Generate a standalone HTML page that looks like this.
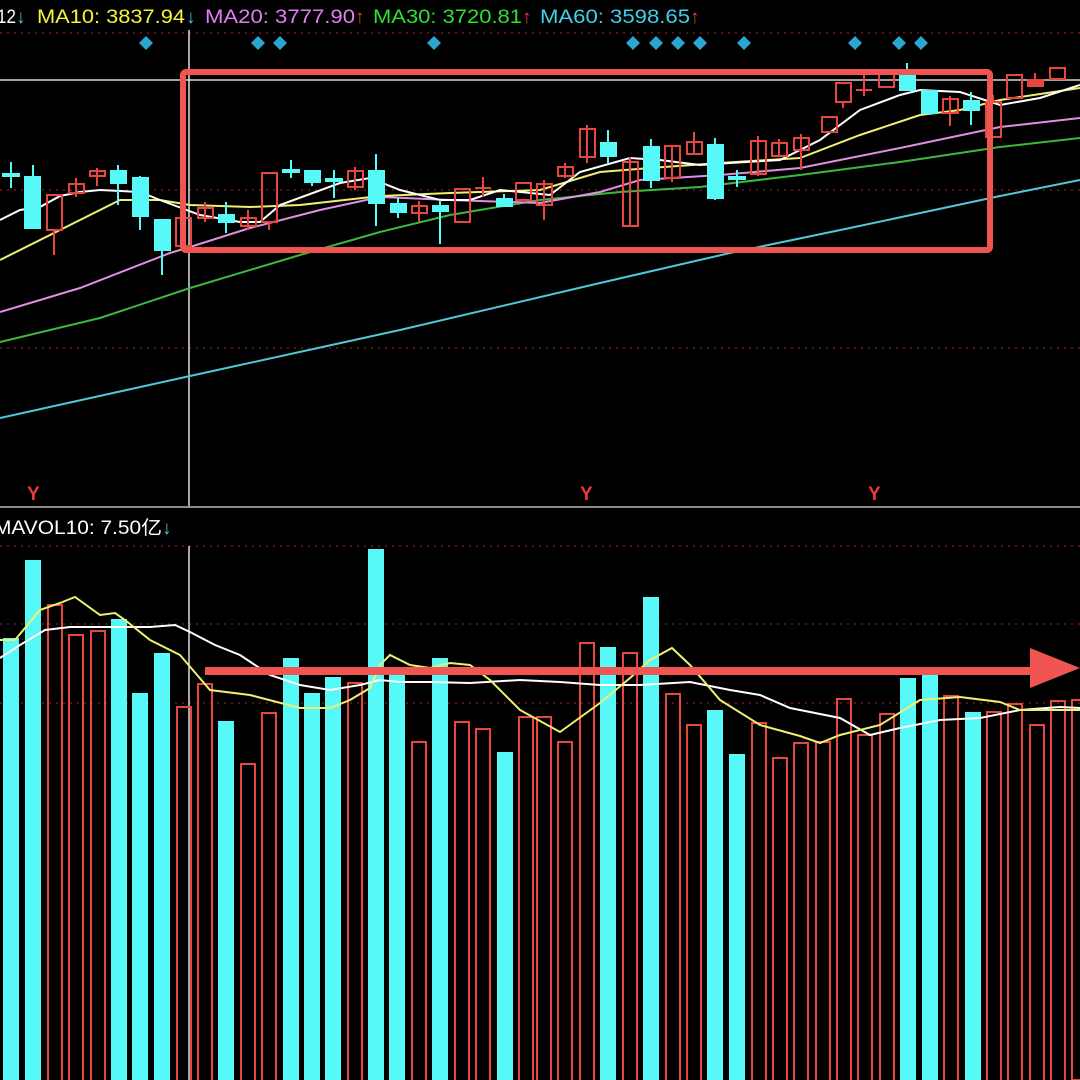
<!DOCTYPE html>
<html><head><meta charset="utf-8"><style>
html,body{margin:0;padding:0;background:#000;width:1080px;height:1080px;overflow:hidden}
svg{display:block}
text{font-family:"Liberation Sans","Noto Sans CJK SC",sans-serif}
</style></head><body>
<svg width="1080" height="1080" viewBox="0 0 1080 1080" xmlns="http://www.w3.org/2000/svg">
<rect width="1080" height="1080" fill="#000"/>
<!-- grid -->
<g stroke="#8a1f1f" stroke-width="1.3" stroke-dasharray="2 5">
<line x1="0" y1="33" x2="1080" y2="33"/>
<line x1="0" y1="190" x2="1080" y2="190"/>
<line x1="0" y1="348" x2="1080" y2="348"/>
<line x1="0" y1="546" x2="1080" y2="546"/>
<line x1="0" y1="624" x2="1080" y2="624"/>
<line x1="0" y1="703" x2="1080" y2="703"/>
</g>
<line x1="0" y1="507" x2="1080" y2="507" stroke="#bbb" stroke-width="1.5"/>
<line x1="0" y1="80" x2="1080" y2="80" stroke="#fff" stroke-width="1.3"/>
<line x1="189" y1="30" x2="189" y2="506" stroke="#fff" stroke-width="1.3"/>
<line x1="189" y1="546" x2="189" y2="1080" stroke="#fff" stroke-width="1.3"/>
<!-- header -->
<g font-size="19">
<text x="-3" y="23" fill="#fff" textLength="19" lengthAdjust="spacingAndGlyphs">12</text>
<text x="16" y="23" fill="#4fc0d8">↓</text>
<text x="37" y="23" fill="#f5f53c" textLength="148" lengthAdjust="spacingAndGlyphs">MA10: 3837.94</text>
<text x="186" y="23" fill="#4fc0d8">↓</text>
<text x="205" y="23" fill="#e080f0" textLength="150" lengthAdjust="spacingAndGlyphs">MA20: 3777.90</text>
<text x="355" y="23" fill="#e04040">↑</text>
<text x="373" y="23" fill="#30e030" textLength="149" lengthAdjust="spacingAndGlyphs">MA30: 3720.81</text>
<text x="522" y="23" fill="#e04040">↑</text>
<text x="540" y="23" fill="#40d0e8" textLength="150" lengthAdjust="spacingAndGlyphs">MA60: 3598.65</text>
<text x="690" y="23" fill="#e04040">↑</text>
</g>
<!-- diamonds -->
<g fill="#2aa6d0">
<path d="M146 36l7 7-7 7-7-7z"/><path d="M258 36l7 7-7 7-7-7z"/><path d="M280 36l7 7-7 7-7-7z"/><path d="M434 36l7 7-7 7-7-7z"/><path d="M633 36l7 7-7 7-7-7z"/><path d="M656 36l7 7-7 7-7-7z"/><path d="M678 36l7 7-7 7-7-7z"/><path d="M700 36l7 7-7 7-7-7z"/><path d="M744 36l7 7-7 7-7-7z"/><path d="M855 36l7 7-7 7-7-7z"/><path d="M899 36l7 7-7 7-7-7z"/><path d="M921 36l7 7-7 7-7-7z"/>
</g>
<!-- MA lines -->
<g fill="none" stroke-width="2">
<polyline stroke="#4fc8d8" points="0,418 190,376 400,330 600,283 730,253 850,228 1000,196 1080,180"/>
<polyline stroke="#3cb83c" points="0,342 100,318 190,288 300,255 380,232 450,215 540,200 620,192 700,187 800,175 900,162 1000,147 1080,138"/>
<polyline stroke="#e090e0" points="0,312 80,288 170,253 190,247 250,228 320,210 380,197 450,200 540,203 600,192 640,180 720,175 800,168 850,158 900,148 1000,127 1080,118"/>
<polyline stroke="#f0f070" points="0,260 60,230 120,200 160,200 190,205 250,207 300,205 380,196 450,193 540,190 600,172 650,168 720,163 800,158 860,135 920,115 960,110 1000,100 1080,88"/>
<polyline stroke="#fff" points="0,220 20,210 40,207 60,196 80,192 100,190 140,192 160,200 200,215 240,222 260,222 280,205 340,183 370,178 400,190 440,200 470,200 500,190 550,195 580,172 630,158 660,160 700,165 730,163 780,160 820,140 860,110 900,95 920,90 960,92 1000,105 1040,98 1080,85"/>
</g>
<!-- candles -->
<g stroke-width="2">
<g stroke="#56f8f8" fill="#56f8f8">
<line x1="11" y1="162" x2="11" y2="188"/><rect x="3" y="174" width="16" height="2"/>
<line x1="33" y1="165" x2="33" y2="228"/><rect x="25" y="177" width="15" height="51"/>
<line x1="118" y1="165" x2="118" y2="205"/><rect x="111" y="171" width="15" height="12"/>
<line x1="140" y1="176" x2="140" y2="230"/><rect x="133" y="178" width="15" height="38"/>
<line x1="162" y1="220" x2="162" y2="275"/><rect x="155" y="220" width="15" height="30"/>
<line x1="226" y1="202" x2="226" y2="233"/><rect x="219" y="215" width="15" height="7"/>
<line x1="291" y1="160" x2="291" y2="178"/><rect x="283" y="170" width="16" height="2"/>
<line x1="312" y1="171" x2="312" y2="186"/><rect x="305" y="171" width="15" height="11"/>
<line x1="334" y1="170" x2="334" y2="198"/><rect x="326" y="179" width="16" height="2"/>
<line x1="376" y1="154" x2="376" y2="226"/><rect x="369" y="171" width="15" height="32"/>
<line x1="398" y1="198" x2="398" y2="218"/><rect x="391" y="204" width="15" height="8"/>
<line x1="440" y1="200" x2="440" y2="244"/><rect x="433" y="206" width="15" height="5"/>
<line x1="504" y1="194" x2="504" y2="206"/><rect x="497" y="199" width="15" height="7"/>
<line x1="608" y1="130" x2="608" y2="163"/><rect x="601" y="143" width="15" height="13"/>
<line x1="651" y1="139" x2="651" y2="188"/><rect x="644" y="147" width="15" height="33"/>
<line x1="715" y1="138" x2="715" y2="200"/><rect x="708" y="145" width="15" height="53"/>
<line x1="737" y1="170" x2="737" y2="187"/><rect x="729" y="177" width="16" height="2"/>
<line x1="907" y1="63" x2="907" y2="90"/><rect x="900" y="74" width="15" height="16"/>
<line x1="929" y1="91" x2="929" y2="115"/><rect x="922" y="91" width="15" height="22"/>
<line x1="971" y1="92" x2="971" y2="125"/><rect x="964" y="101" width="15" height="9"/>
</g>
<g stroke="#e8453e" fill="none">
<line x1="54" y1="230" x2="54" y2="255"/><rect x="47" y="195" width="15" height="35"/>
<line x1="76" y1="178" x2="76" y2="197"/><rect x="69" y="184" width="15" height="9"/>
<line x1="97" y1="168" x2="97" y2="186"/><rect x="90" y="171" width="15" height="5"/>
<rect x="176" y="218" width="15" height="28"/>
<line x1="205" y1="202" x2="205" y2="222"/><rect x="198" y="208" width="15" height="10"/>
<line x1="248" y1="210" x2="248" y2="230"/><rect x="241" y="218" width="15" height="8"/>
<line x1="269" y1="222" x2="269" y2="230"/><rect x="262" y="173" width="15" height="49"/>
<line x1="355" y1="167" x2="355" y2="190"/><rect x="348" y="171" width="15" height="16"/>
<line x1="419" y1="201" x2="419" y2="222"/><rect x="412" y="206" width="15" height="7"/>
<rect x="455" y="189" width="15" height="33"/>
<line x1="483" y1="177" x2="483" y2="197"/><line x1="475" y1="188" x2="491" y2="188"/>
<rect x="516" y="183" width="15" height="17"/>
<line x1="544" y1="180" x2="544" y2="220"/><rect x="537" y="184" width="15" height="21"/>
<line x1="565" y1="163" x2="565" y2="178"/><rect x="558" y="167" width="15" height="9"/>
<line x1="587" y1="125" x2="587" y2="163"/><rect x="580" y="129" width="15" height="28"/>
<line x1="630" y1="157" x2="630" y2="226"/><rect x="623" y="162" width="15" height="64"/>
<line x1="672" y1="145" x2="672" y2="182"/><rect x="665" y="146" width="15" height="32"/>
<line x1="694" y1="132" x2="694" y2="154"/><rect x="687" y="142" width="15" height="12"/>
<line x1="758" y1="136" x2="758" y2="176"/><rect x="751" y="141" width="15" height="33"/>
<line x1="779" y1="139" x2="779" y2="156"/><rect x="772" y="143" width="15" height="13"/>
<line x1="801" y1="134" x2="801" y2="170"/><rect x="794" y="138" width="15" height="12"/>
<rect x="822" y="117" width="15" height="15"/>
<line x1="843" y1="102" x2="843" y2="108"/><rect x="836" y="83" width="15" height="19"/>
<line x1="864" y1="73" x2="864" y2="96"/><line x1="856" y1="90" x2="872" y2="90"/>
<rect x="879" y="73" width="15" height="14"/>
<line x1="950" y1="96" x2="950" y2="126"/><rect x="943" y="99" width="15" height="14"/>
<line x1="993" y1="95" x2="993" y2="102"/><rect x="986" y="102" width="15" height="35"/>
<rect x="1007" y="75" width="15" height="23"/>
<line x1="1035" y1="73" x2="1035" y2="82"/><rect x="1028" y="80" width="15" height="6" fill="#e8453e"/>
<rect x="1050" y="68" width="15" height="11"/>
</g>
</g>
<!-- highlight box -->
<rect x="183" y="72" width="807" height="178" rx="3" fill="none" stroke="#f05552" stroke-width="6"/>
<!-- Y markers -->
<g fill="#e83a3a" font-size="19" font-weight="bold">
<text x="27" y="500">Y</text><text x="580" y="500">Y</text><text x="868" y="500">Y</text>
</g>
<!-- volume label -->
<text x="-6" y="534" font-size="19" fill="#fff" textLength="168" lengthAdjust="spacingAndGlyphs">MAVOL10: 7.50亿</text>
<text x="162" y="534" font-size="19" fill="#4fc0d8">↓</text>
<!-- volume bars -->
<g fill="#56f8f8">
<rect x="3" y="638" width="16" height="442"/><rect x="25" y="560" width="16" height="520"/>
<rect x="111" y="619" width="16" height="461"/><rect x="132" y="693" width="16" height="387"/>
<rect x="154" y="653" width="16" height="427"/><rect x="218" y="721" width="16" height="359"/>
<rect x="283" y="658" width="16" height="422"/><rect x="304" y="693" width="16" height="387"/>
<rect x="325" y="677" width="16" height="403"/><rect x="368" y="549" width="16" height="531"/>
<rect x="389" y="673" width="16" height="407"/><rect x="432" y="658" width="16" height="422"/>
<rect x="497" y="752" width="16" height="328"/><rect x="600" y="647" width="16" height="433"/>
<rect x="643" y="597" width="16" height="483"/><rect x="707" y="710" width="16" height="370"/>
<rect x="729" y="754" width="16" height="326"/><rect x="900" y="678" width="16" height="402"/>
<rect x="922" y="675" width="16" height="405"/><rect x="965" y="712" width="16" height="368"/>
</g>
<g fill="none" stroke="#e8453e" stroke-width="2">
<rect x="48" y="605" width="14" height="480"/><rect x="69" y="635" width="14" height="450"/>
<rect x="91" y="631" width="14" height="454"/><rect x="177" y="707" width="14" height="380"/>
<rect x="198" y="684" width="14" height="400"/><rect x="241" y="764" width="14" height="320"/>
<rect x="262" y="713" width="14" height="370"/><rect x="348" y="683" width="14" height="400"/>
<rect x="412" y="742" width="14" height="340"/><rect x="455" y="722" width="14" height="360"/>
<rect x="476" y="729" width="14" height="360"/><rect x="519" y="717" width="14" height="370"/>
<rect x="537" y="717" width="14" height="370"/><rect x="558" y="742" width="14" height="340"/>
<rect x="580" y="643" width="14" height="440"/><rect x="623" y="653" width="14" height="430"/>
<rect x="666" y="694" width="14" height="390"/><rect x="687" y="725" width="14" height="360"/>
<rect x="752" y="723" width="14" height="360"/><rect x="773" y="758" width="14" height="330"/>
<rect x="794" y="743" width="14" height="340"/><rect x="816" y="742" width="14" height="340"/>
<rect x="837" y="699" width="14" height="390"/><rect x="858" y="735" width="14" height="350"/>
<rect x="880" y="714" width="14" height="370"/><rect x="944" y="696" width="14" height="390"/>
<rect x="987" y="712" width="14" height="370"/><rect x="1008" y="704" width="14" height="380"/>
<rect x="1030" y="725" width="14" height="360"/><rect x="1051" y="701" width="14" height="380"/>
<rect x="1072" y="700" width="14" height="380"/>
</g>
<!-- volume MA -->
<g fill="none" stroke-width="2">
<polyline stroke="#fff" points="0,658 20,645 45,630 70,627 100,627 150,627 175,625 190,632 215,645 240,655 270,675 300,685 330,690 360,685 380,680 400,682 430,682 470,683 520,680 560,682 600,685 640,685 690,682 730,690 760,695 790,708 840,718 870,735 900,728 940,720 980,718 1020,710 1060,707 1080,708"/>
<polyline stroke="#f0f070" points="0,640 15,640 40,610 60,603 75,597 100,615 115,613 125,620 150,640 180,655 210,690 250,695 300,708 330,708 350,700 370,688 380,665 390,655 410,665 430,668 450,663 470,665 490,680 520,710 560,732 600,703 630,678 650,660 672,648 690,665 720,700 760,725 800,736 820,743 840,735 880,725 920,700 960,697 1000,702 1020,710 1080,710"/>
</g>
<!-- arrow -->
<rect x="205" y="667" width="830" height="8" fill="#f05552"/>
<path d="M1030 648 L1080 668 L1030 688 Z" fill="#f05552"/>
</svg>
</body></html>
